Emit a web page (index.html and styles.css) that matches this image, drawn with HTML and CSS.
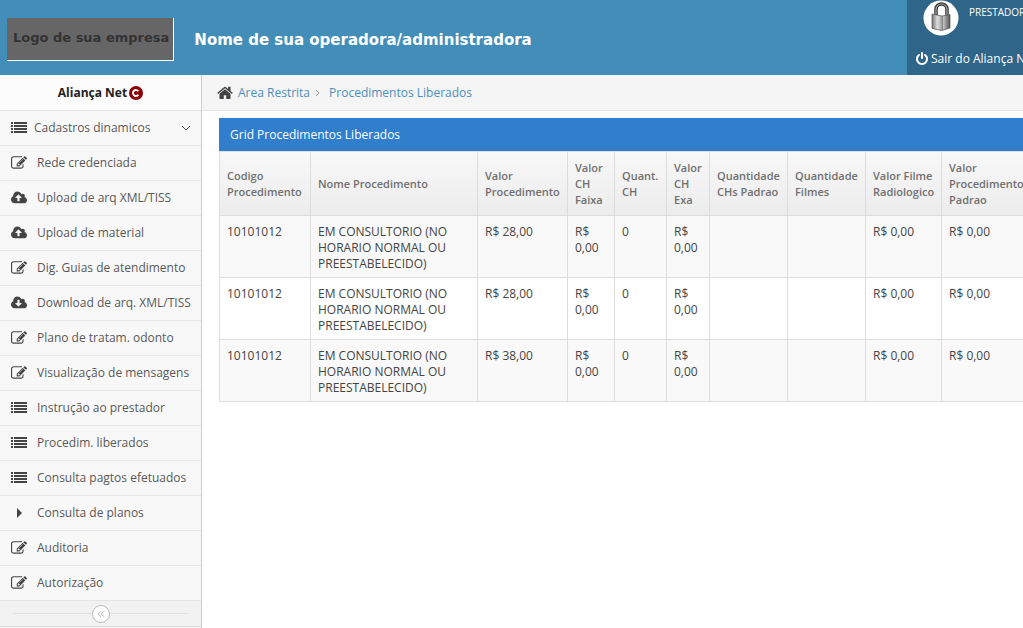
FILE: index.html
```html
<!DOCTYPE html>
<html lang="pt-BR">
<head>
<meta charset="utf-8">
<title>Procedimentos Liberados</title>
<link rel="stylesheet" href="styles.css">
</head>
<body>
<svg class="defs" aria-hidden="true">
  <symbol id="i-list" viewBox="0 0 16 16"><path d="M0 2h2v2H0zM3 2h13v2H3zM0 5h2v2H0zM3 5h13v2H3zM0 8h2v2H0zM3 8h13v2H3zM0 11h2v2H0zM3 11h13v2H3z"/></symbol>
  <symbol id="i-edit" viewBox="0 0 1792 1792"><path d="M888 1184l116-116-152-152-116 116v56h96v96h56zm440-720q-16-16-33 1l-350 350q-17 17-1 33t33-1l350-350q17-17 1-33zm80 594v190q0 119-84.5 203.5t-203.5 84.5h-832q-119 0-203.5-84.5t-84.5-203.5v-832q0-119 84.5-203.5t203.5-84.5h832q63 0 117 25 15 7 18 23 3 17-9 29l-49 49q-14 14-32 8-23-6-45-6h-832q-66 0-113 47t-47 113v832q0 66 47 113t113 47h832q66 0 113-47t47-113v-126q0-13 9-22l64-64q15-15 35-7t20 29zm-96-738l288 288-672 672h-288v-288zm444 132l-92 92-288-288 92-92q28-28 68-28t68 28l152 152q28 28 28 68t-28 68z"/></symbol>
  <symbol id="i-up" viewBox="-64 0 1920 1792"><path d="M1216 864q0-14-9-23l-352-352q-9-9-23-9t-23 9l-351 351q-10 12-10 24 0 14 9 23t23 9h224v352q0 13 9.500 22.500t22.500 9.500h192q13 0 22.500-9.500t9.500-22.500v-352h224q13 0 22.500-9.500t9.500-22.500zm640 288q0 159-112.500 271.500t-271.500 112.500h-1088q-185 0-316.500-131.500t-131.500-316.500q0-130 70-240t188-165q-2-30-2-43 0-212 150-362t362-150q156 0 285.500 87t188.500 231q71-62 166-62 106 0 181 75t75 181q0 76-41 138 130 31 213.500 135.500t83.500 238.500z"/></symbol>
  <symbol id="i-down" viewBox="-64 0 1920 1792"><path d="M1216 928q0-14-9-23t-23-9h-224v-352q0-13-9.500-22.500t-22.500-9.500h-192q-13 0-22.500 9.500t-9.500 22.500v352h-224q-13 0-22.500 9.500t-9.500 22.500q0 14 9 23l352 352q9 9 23 9t23-9l351-351q10-12 10-24zm640 224q0 159-112.500 271.500t-271.500 112.500h-1088q-185 0-316.500-131.500t-131.500-316.500q0-130 70-240t188-165q-2-30-2-43 0-212 150-362t362-150q156 0 285.500 87t188.500 231q71-62 166-62 106 0 181 75t75 181q0 76-41 138 130 31 213.500 135.500t83.500 238.500z"/></symbol>
  <symbol id="i-caret" viewBox="0 0 16 16"><path d="M6 3l5 5-5 5z"/></symbol>
  <symbol id="i-home" viewBox="64 180 1664 1460"><path d="M1472 992v480q0 26-19 45t-45 19h-384v-384h-256v384h-384q-26 0-45-19t-19-45v-480q0-1 .5-3t.5-3l575-474 575 474q1 2 1 6zm223-69l-62 74q-8 9-21 11h-3q-13 0-21-7l-692-577-692 577q-12 8-24 7-13-2-21-11l-62-74q-8-10-7-23.500t11-21.500l719-599q32-26 76-26t76 26l244 204v-195q0-14 9-23t23-9h192q14 0 23 9t9 23v408l219 182q10 8 11 21.500t-7 23.500z"/></symbol>
  <symbol id="i-power" viewBox="0 0 1792 1792"><path d="M1664 896q0 156-61 298t-164 245-245 164-298 61-298-61-245-164-164-245-61-298q0-182 80.500-343t226.500-270q43-32 95.500-25t83.500 50q32 42 24.500 94.500t-49.500 84.500q-98 74-151.500 181t-53.500 228q0 104 40.500 198.500t109.500 163.500 163.500 109.500 198.500 40.500 198.500-40.500 163.500-109.500 109.500-163.500 40.500-198.500q0-121-53.500-228t-151.500-181q-42-32-49.500-84.500t24.500-94.500q31-43 84-50t95 25q146 109 226.500 270t80.500 343zm-640-768v640q0 52-38 90t-90 38-90-38-38-90v-640q0-52 38-90t90-38 90 38 38 90z"/></symbol>
</svg>

<header class="topbar">
  <div class="logo">Logo de sua empresa</div>
  <h1 class="company">Nome de sua operadora/administradora</h1>
  <div class="user">
    <div class="user-row">
      <svg class="avatar" viewBox="0 0 36 36" aria-hidden="true">
        <defs>
          <linearGradient id="metal" x1="0" x2="1" y1="0" y2="0"><stop offset="0" stop-color="#777"/><stop offset=".3" stop-color="#ddd"/><stop offset=".52" stop-color="#aaa"/><stop offset=".56" stop-color="#666"/><stop offset=".62" stop-color="#c4c4c4"/><stop offset="1" stop-color="#555"/></linearGradient>
        </defs>
        <circle cx="18" cy="18" r="17.500" fill="#fff"/>
        <path d="M13 16V9.500a5.500 5.500 0 0 1 11 0V17" fill="none" stroke="#333" stroke-width="3.500"/>
        <path d="M13 16V9.500a5.500 5.500 0 0 1 11 0V17" fill="none" stroke="#aaa" stroke-width="1.200"/>
        <path d="M9 14l10 2 8-1.500v13.500l-8 2.500-10-2z" fill="url(#metal)" stroke="#555" stroke-width=".7"/>
      </svg>
      <span class="role">PRESTADOR</span>
    </div>
    <a class="logout" href="#"><svg class="power" aria-hidden="true"><use href="#i-power"/></svg>Sair do Aliança N</a>
  </div>
</header>

<div class="layout">
  <aside class="sidebar">
    <div class="brand">Aliança Net<svg class="brand-mark" viewBox="0 0 14 14" aria-hidden="true"><circle cx="7" cy="7" r="7" fill="#8b0008"/><path d="M9.400 5.300A3 3 0 1 0 9.400 8.700" fill="none" stroke="#fff" stroke-width="1.800"/></svg></div>
    <nav>
      <ul class="menu">
        <li><a class="parent" href="#"><svg class="icon" aria-hidden="true"><use href="#i-list"/></svg><span>Cadastros dinamicos</span><svg class="chevron" viewBox="0 0 10 10" aria-hidden="true"><path d="M1 3l4 4 4-4"/></svg></a></li>
        <li><a href="#"><svg class="icon" aria-hidden="true"><use href="#i-edit"/></svg><span>Rede credenciada</span></a></li>
        <li><a href="#"><svg class="icon" aria-hidden="true"><use href="#i-up"/></svg><span>Upload de arq XML/TISS</span></a></li>
        <li><a href="#"><svg class="icon" aria-hidden="true"><use href="#i-up"/></svg><span>Upload de material</span></a></li>
        <li><a href="#"><svg class="icon" aria-hidden="true"><use href="#i-edit"/></svg><span>Dig. Guias de atendimento</span></a></li>
        <li><a href="#"><svg class="icon" aria-hidden="true"><use href="#i-down"/></svg><span>Download de arq. XML/TISS</span></a></li>
        <li><a href="#"><svg class="icon" aria-hidden="true"><use href="#i-edit"/></svg><span>Plano de tratam. odonto</span></a></li>
        <li><a href="#"><svg class="icon" aria-hidden="true"><use href="#i-edit"/></svg><span>Visualização de mensagens</span></a></li>
        <li><a href="#"><svg class="icon" aria-hidden="true"><use href="#i-list"/></svg><span>Instrução ao prestador</span></a></li>
        <li><a href="#"><svg class="icon" aria-hidden="true"><use href="#i-list"/></svg><span>Procedim. liberados</span></a></li>
        <li><a href="#"><svg class="icon" aria-hidden="true"><use href="#i-list"/></svg><span>Consulta pagtos efetuados</span></a></li>
        <li><a href="#"><svg class="icon" aria-hidden="true"><use href="#i-caret"/></svg><span>Consulta de planos</span></a></li>
        <li><a href="#"><svg class="icon" aria-hidden="true"><use href="#i-edit"/></svg><span>Auditoria</span></a></li>
        <li><a href="#"><svg class="icon" aria-hidden="true"><use href="#i-edit"/></svg><span>Autorização</span></a></li>
      </ul>
    </nav>
    <div class="collapse"><button type="button" aria-label="Recolher menu"><svg viewBox="0 0 10 10" aria-hidden="true"><path d="M5 1.500L1.500 5 5 8.500M9 1.500L5.500 5 9 8.500"/></svg></button></div>
  </aside>

  <main class="content">
    <nav class="crumbs" aria-label="Navegação">
      <svg class="home" aria-hidden="true"><use href="#i-home"/></svg>
      <a href="#">Area Restrita</a>
      <svg class="sep" viewBox="0 0 10 10" aria-hidden="true"><path d="M3 2L6 5 3 8"/></svg>
      <a href="#">Procedimentos Liberados</a>
    </nav>
    <section class="panel">
      <h2 class="panel-title">Grid Procedimentos Liberados</h2>
      <table class="grid">
        <colgroup>
          <col class="c-code"><col class="c-name"><col class="c-value"><col class="c-range"><col class="c-count"><col class="c-exam"><col class="c-qty"><col class="c-qty"><col class="c-film"><col class="c-value">
        </colgroup>
        <thead>
          <tr><th>Codigo Procedimento</th><th>Nome Procedimento</th><th>Valor Procedimento</th><th>Valor CH Faixa</th><th>Quant. CH</th><th>Valor CH Exa</th><th>Quantidade CHs Padrao</th><th>Quantidade Filmes</th><th>Valor Filme Radiologico</th><th>Valor Procedimento Padrao</th></tr>
        </thead>
        <tbody>
          <tr><td>10101012</td><td>EM CONSULTORIO (NO HORARIO NORMAL OU PREESTABELECIDO)</td><td>R$ 28,00</td><td>R$ 0,00</td><td>0</td><td>R$ 0,00</td><td></td><td></td><td>R$ 0,00</td><td>R$ 0,00</td></tr>
          <tr><td>10101012</td><td>EM CONSULTORIO (NO HORARIO NORMAL OU PREESTABELECIDO)</td><td>R$ 28,00</td><td>R$ 0,00</td><td>0</td><td>R$ 0,00</td><td></td><td></td><td>R$ 0,00</td><td>R$ 0,00</td></tr>
          <tr><td>10101012</td><td>EM CONSULTORIO (NO HORARIO NORMAL OU PREESTABELECIDO)</td><td>R$ 38,00</td><td>R$ 0,00</td><td>0</td><td>R$ 0,00</td><td></td><td></td><td>R$ 0,00</td><td>R$ 0,00</td></tr>
        </tbody>
      </table>
    </section>
  </main>
</div>
</body>
</html>
```
FILE: styles.css
```css
* { box-sizing: border-box; }

body {
  margin: 0;
  min-height: 100vh;
  display: flex;
  flex-direction: column;
  overflow-x: hidden;
  background: #fff;
  color: #444;
  font: 12px/16px "Open Sans", sans-serif;
}

a { text-decoration: none; }
svg { flex: none; }
.defs { position: absolute; width: 0; height: 0; }

/* Top bar */
.topbar {
  display: flex;
  align-items: center;
  height: 75px;
  padding-left: 7px;
  background: #438eb9;
}

.logo {
  height: 43px;
  margin-top: 3px;
  padding: 0 4px 0 6px;
  border: solid #fff;
  border-width: 0 1px 1px 0;
  background: #666;
  color: #333;
  font: bold 13px/40px "DejaVu Sans", sans-serif;
  white-space: nowrap;
}

.company {
  margin: 4px 0 0 20px;
  color: #fff;
  font: bold 15px/20px "DejaVu Sans", sans-serif;
  white-space: nowrap;
}

.user {
  flex: none;
  width: 116px;
  height: 100%;
  margin-left: auto;
  overflow: hidden;
  background: #2e6589;
  color: #fff;
  white-space: nowrap;
}

.user-row {
  display: flex;
  gap: 10px;
  padding-left: 16px;
}

.avatar { width: 36px; height: 36px; }
.role { padding-top: 4px; font-size: 10px; }

.logout {
  display: flex;
  align-items: center;
  gap: 2px;
  margin-top: 15px;
  padding-left: 8px;
  color: #fff;
}

.power { width: 14px; height: 14px; fill: #fff; }

/* Sidebar */
.layout {
  display: flex;
  flex: 1;
}

.sidebar {
  flex: 0 0 202px;
  border-right: 1px solid #ccc;
  background: #f2f2f2;
}

.brand {
  display: flex;
  align-items: center;
  justify-content: center;
  gap: 2px;
  height: 35px;
  background: #fcfcfc;
  color: #222;
  font-weight: 700;
}

.brand-mark { width: 14px; height: 14px; }

.menu {
  margin: 0;
  padding: 0;
  border-bottom: 1px solid #e5e5e5;
  list-style: none;
}

.menu a {
  display: flex;
  align-items: center;
  gap: 10px;
  height: 35px;
  padding: 0 10px 0 11px;
  border-top: 1px solid #e5e5e5;
  background: #f8f8f8;
  color: #585858;
  white-space: nowrap;
}

.menu .parent { gap: 7px; }
.icon { width: 16px; height: 16px; fill: #444; }

.chevron {
  width: 10px;
  height: 10px;
  margin-left: auto;
  fill: none;
  stroke: #555;
}

.collapse {
  display: flex;
  align-items: center;
  height: 26px;
  padding: 0 13px;
  border-bottom: 1px solid #ddd;
}

.collapse::before,
.collapse::after {
  flex: 1;
  border-top: 1px solid #e0e0e0;
  content: "";
}

.collapse button {
  display: grid;
  place-items: center;
  width: 18px;
  height: 18px;
  padding: 0;
  border: 1px solid #bbb;
  border-radius: 50%;
  background: #fff;
}

.collapse svg { width: 8px; height: 8px; fill: none; stroke: #999; }

/* Content */
.content {
  flex: 1;
  min-width: 0;
}

.crumbs {
  display: flex;
  align-items: center;
  height: 36px;
  padding-left: 15px;
  border-bottom: 1px solid #e5e5e5;
  background: #f5f5f5;
}

.crumbs a { color: #4c8fbd; }
.home { width: 16px; height: 14px; margin-right: 5px; fill: #444; }
.sep { width: 10px; height: 10px; margin: 0 6px 0 3px; fill: none; stroke: #999; }

.panel {
  width: max-content;
  padding: 7px 0 0 17px;
}

.panel-title {
  margin: 0;
  padding: 0 11px;
  background: #307ecc;
  color: #fff;
  font-size: 12px;
  font-weight: 400;
  line-height: 33px;
}

.grid {
  table-layout: fixed;
  width: 813px;
  border-collapse: collapse;
}

.c-code { width: 91px; }
.c-name { width: 167px; }
.c-value { width: 90px; }
.c-range { width: 47px; }
.c-count { width: 52px; }
.c-exam { width: 43px; }
.c-qty { width: 78px; }
.c-film { width: 76px; }

.grid th,
.grid td {
  padding: 7px 0 7px 7px;
  border: 1px solid #ddd;
  text-align: left;
}

.grid th {
  height: 64px;
  color: #707070;
  font-size: 11px;
  font-weight: 600;
}

.grid thead tr { background: linear-gradient(#f8f8f8, #ececec); }
.grid td { padding-top: 8px; padding-bottom: 5px; vertical-align: top; }
.grid td:nth-child(2) { padding-right: 24px; }
.grid tbody tr:nth-child(odd) { background: #f9f9f9; }
```
